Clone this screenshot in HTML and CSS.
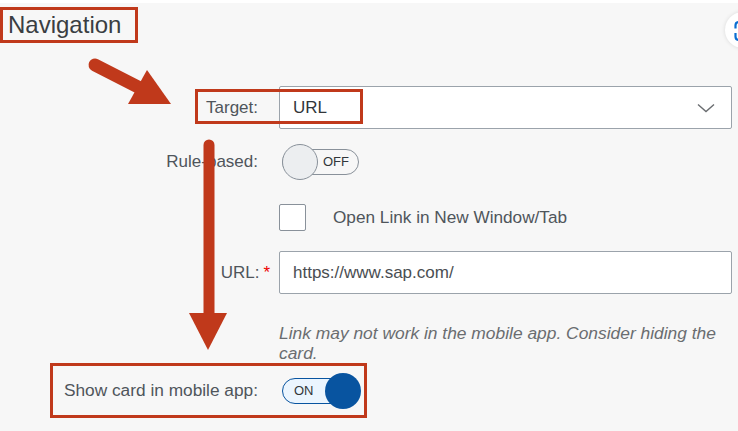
FILE: index.html
```html
<!DOCTYPE html>
<html lang="en">
<head>
    <meta charset="UTF-8">
    <meta name="viewport" content="width=device-width, initial-scale=1.0">
    <title>Card Navigation</title>
    <link rel="stylesheet" href="styles.css">
</head>
<body>
    <div class="page">
        <h2 class="section-title">Navigation</h2>

        <form class="nav-form">
            <div class="row row-target">
                <label class="label">Target:</label>
                <div class="select">
                    <span>URL</span>
                    <svg class="chevron" width="18" height="10" viewBox="0 0 18 10">
                        <path d="M1 1.5 L9 8.5 L17 1.5" fill="none" stroke="#6a6d70" stroke-width="1.4"/>
                    </svg>
                </div>
            </div>

            <div class="row row-switch">
                <label class="label">Rule-based:</label>
                <div class="switch off">
                    <span class="knob"></span>
                    <span class="switch-text">OFF</span>
                </div>
            </div>

            <div class="row row-check">
                <span></span>
                <label class="check">
                    <span class="check-box"></span>
                    <span>Open Link in New Window/Tab</span>
                </label>
            </div>

            <div class="row row-url">
                <label class="label">URL:<span class="req">*</span></label>
                <div class="input">https://www.sap.com/</div>
            </div>

            <div class="row row-hint">
                <span></span>
                <p class="hint">Link may not work in the mobile app. Consider hiding the card.</p>
            </div>

            <div class="row-mobile">
                <label class="label">Show card in mobile app:</label>
                <div class="switch on">
                    <span class="switch-text">ON</span>
                    <span class="knob"></span>
                </div>
            </div>
        </form>

        <!-- annotations drawn over the form -->
        <div class="callout-target"></div>
        <svg class="arrows" width="738" height="431" viewBox="0 0 738 431">
            <line x1="95" y1="65" x2="140" y2="88" stroke="#c0391b" stroke-width="13" stroke-linecap="round"/>
            <polygon points="147,70 128,104 171,104" fill="#c0391b"/>
            <line x1="209" y1="145" x2="209" y2="316" stroke="#c0391b" stroke-width="11" stroke-linecap="round"/>
            <polygon points="189,313 227,313 208,350" fill="#c0391b"/>
        </svg>

        <div class="fab">
            <svg width="36" height="36" viewBox="0 0 36 36">
                <path d="M14 10 Q10.5 10 10.5 13.5 L10.5 16.5 M10.5 21 L10.5 24.5 Q10.5 28 14 28" fill="none" stroke="#0a6ed1" stroke-width="2.2"/>
            </svg>
        </div>
    </div>
</body>
</html>
```

FILE: styles.css
```css
body {
    margin: 0;
    padding: 0;
    font-family: "Liberation Sans", Arial, sans-serif;
    background-color: #f7f7f7;
    color: #32363a;
    overflow: hidden;
}

.page {
    position: relative;
    width: 738px;
    height: 431px;
    border-top: 3px solid #ffffff;
    box-sizing: border-box;
}

.section-title {
    display: inline-block;
    margin: 4px 0 0 0;
    padding: 0 14px 0 5px;
    height: 30px;
    font-size: 24px;
    line-height: 30px;
    font-weight: normal;
    color: #3a3e42;
    border: 3px solid #c0391b;
}

.nav-form {
    margin-top: 43px;
    padding-right: 6px;
}

.row {
    display: grid;
    grid-template-columns: 258px 1fr;
    column-gap: 21px;
    align-items: center;
}

.label {
    text-align: right;
    font-size: 17px;
    color: #4f555b;
    white-space: nowrap;
}

.req {
    color: #e00;
    margin-left: 4px;
    margin-right: -12px;
}

/* rows */
.row-target {
    height: 43px;
}

.row-switch {
    height: 45px;
    margin-top: 10px;
}

.row-check {
    height: 27px;
    margin-top: 20px;
}

.row-url {
    height: 43px;
    margin-top: 20px;
}

.row-hint {
    margin-top: 29px;
}

/* select and input */
.select,
.input {
    height: 43px;
    box-sizing: border-box;
    background-color: #ffffff;
    border: 1px solid #9ba3ab;
    border-radius: 2px;
    display: flex;
    align-items: center;
    padding-left: 13px;
    font-size: 17px;
    color: #32363a;
}

.select {
    justify-content: space-between;
    padding-right: 16px;
}

.select .chevron {
    display: block;
}

.input {
    color: #4a4e52;
}

/* switch */
.switch {
    position: relative;
    width: 77px;
    height: 26px;
    box-sizing: border-box;
    margin-left: 3px;
    border-radius: 13px;
    display: flex;
    align-items: center;
}

.switch.off {
    border: 1px solid #89919a;
    background-color: #f7f7f7;
}

.switch.on {
    border: 1.5px solid #0854a0;
    background-color: #ebf5fe;
}

.switch .knob {
    position: absolute;
    top: 50%;
    width: 36px;
    height: 36px;
    margin-top: -18px;
    border-radius: 50%;
    box-sizing: border-box;
}

.switch.off .knob {
    left: -1px;
    background-color: #eceef0;
    border: 1px solid #89919a;
}

.switch.on .knob {
    right: -3px;
    background-color: #0854a0;
}

.switch-text {
    font-size: 13px;
    color: #32363a;
}

.switch.off .switch-text {
    margin-left: 40px;
}

.switch.on .switch-text {
    margin-left: 11px;
}

/* checkbox */
.check {
    display: flex;
    align-items: center;
    font-size: 17.2px;
    color: #4f555b;
}

.check-box {
    width: 27px;
    height: 27px;
    box-sizing: border-box;
    background-color: #ffffff;
    border: 1px solid #89919a;
    border-radius: 2px;
    margin-right: 27px;
}

/* hint */
.hint {
    margin: 0;
    max-width: 453px;
    font-size: 17.4px;
    line-height: 20px;
    font-style: italic;
    color: #6a6d70;
}

/* highlighted mobile row */
.row-mobile {
    display: grid;
    grid-template-columns: 205px auto;
    column-gap: 21px;
    align-items: center;
    width: 317px;
    height: 55px;
    box-sizing: border-box;
    margin-left: 50px;
    border: 3px solid #c0391b;
}

.row-mobile .label {
    font-size: 17.3px;
}

/* annotations */
.callout-target {
    position: absolute;
    left: 195px;
    top: 86px;
    width: 168px;
    height: 35px;
    box-sizing: border-box;
    border: 3px solid #c0391b;
}

.arrows {
    position: absolute;
    left: 0;
    top: -3px;
    pointer-events: none;
}

.fab {
    position: absolute;
    left: 725px;
    top: 9px;
    width: 36px;
    height: 36px;
    border-radius: 50%;
    background-color: #ffffff;
    box-shadow: 0 0 4px rgba(0, 0, 0, 0.12);
}
```
